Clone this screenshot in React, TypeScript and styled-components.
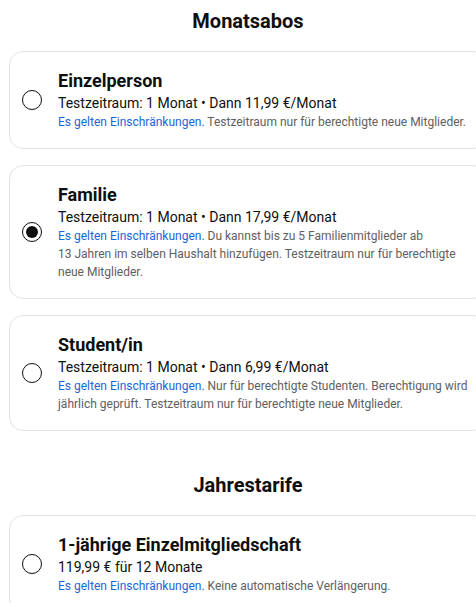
import React from "react";
import styled, { createGlobalStyle } from "styled-components";

const Global = createGlobalStyle`
  html, body { margin: 0; padding: 0; background: #fff; overflow: hidden; }
  body { font-family: Roboto, "Noto Sans", Arial, sans-serif; color: #0f0f0f; }
`;

const Page = styled.div`
  width: 478px;
  margin-left: 9px;
  padding-top: 7px;
  display: flex;
  flex-direction: column;
`;

const Section = styled.section`
  display: flex;
  flex-direction: column;
  gap: 16px;
  & + & { margin-top: 40px; }
`;

const Heading = styled.h2`
  margin: 0;
  font-size: 20px;
  line-height: 28px;
  font-weight: 700;
  text-align: center;
  color: #0f0f0f;
`;

const Card = styled.label`
  display: flex;
  align-items: center;
  gap: 16px;
  padding: 18px 12px 18px 12px;
  border: 1px solid #e2e2e2;
  border-radius: 14px;
  background: #fff;
`;

const Radio = styled.span<{ $checked?: boolean }>`
  flex: 0 0 auto;
  width: 20px;
  height: 20px;
  box-sizing: border-box;
  border: 1.5px solid #0f0f0f;
  border-radius: 50%;
  display: flex;
  align-items: center;
  justify-content: center;
  &::after {
    content: "";
    width: 12px;
    height: 12px;
    border-radius: 50%;
    background: #0f0f0f;
    display: ${(p) => (p.$checked ? "block" : "none")};
  }
`;

const Body = styled.div`
  display: flex;
  flex-direction: column;
  min-width: 0;
`;

const Title = styled.div`
  font-size: 18px;
  line-height: 22px;
  font-weight: 700;
  color: #0f0f0f;
`;

const Price = styled.div`
  font-size: 14px;
  line-height: 20px;
  color: #0f0f0f;
  margin-top: 1px;
`;

const Note = styled.div`
  font-size: 12px;
  line-height: 18px;
  color: #606060;
  max-width: 412px;
  margin-bottom: -1px;
`;

const Link = styled.span`
  color: #1a66d6;
`;

type Plan = { title: string; price: string; note: string; checked?: boolean };

const monthly: Plan[] = [
  {
    title: "Einzelperson",
    price: "Testzeitraum: 1 Monat • Dann 11,99 €/Monat",
    note: "Testzeitraum nur für berechtigte neue Mitglieder.",
  },
  {
    title: "Familie",
    price: "Testzeitraum: 1 Monat • Dann 17,99 €/Monat",
    note:
      "Du kannst bis zu 5 Familienmitglieder ab 13\u00a0Jahren im selben Haushalt hinzufügen. Testzeitraum nur für berechtigte neue Mitglieder.",
    checked: true,
  },
  {
    title: "Student/in",
    price: "Testzeitraum: 1 Monat • Dann 6,99 €/Monat",
    note:
      "Nur für berechtigte Studenten. Berechtigung wird jährlich geprüft. Testzeitraum nur für berechtigte neue Mitglieder.",
  },
];

const yearly: Plan[] = [
  {
    title: "1-jährige Einzelmitgliedschaft",
    price: "119,99 € für 12 Monate",
    note: "Keine automatische Verlängerung.",
  },
];

const PlanCard = ({ plan }: { plan: Plan }) => (
  <Card>
    <Radio $checked={plan.checked} />
    <Body>
      <Title>{plan.title}</Title>
      <Price>{plan.price}</Price>
      <Note>
        <Link>Es gelten Einschränkungen.</Link> {plan.note}
      </Note>
    </Body>
  </Card>
);

export default function App() {
  return (
    <>
      <Global />
      <Page>
        <Section>
          <Heading>Monatsabos</Heading>
          {monthly.map((p) => (
            <PlanCard key={p.title} plan={p} />
          ))}
        </Section>
        <Section>
          <Heading>Jahrestarife</Heading>
          {yearly.map((p) => (
            <PlanCard key={p.title} plan={p} />
          ))}
        </Section>
      </Page>
    </>
  );
}
